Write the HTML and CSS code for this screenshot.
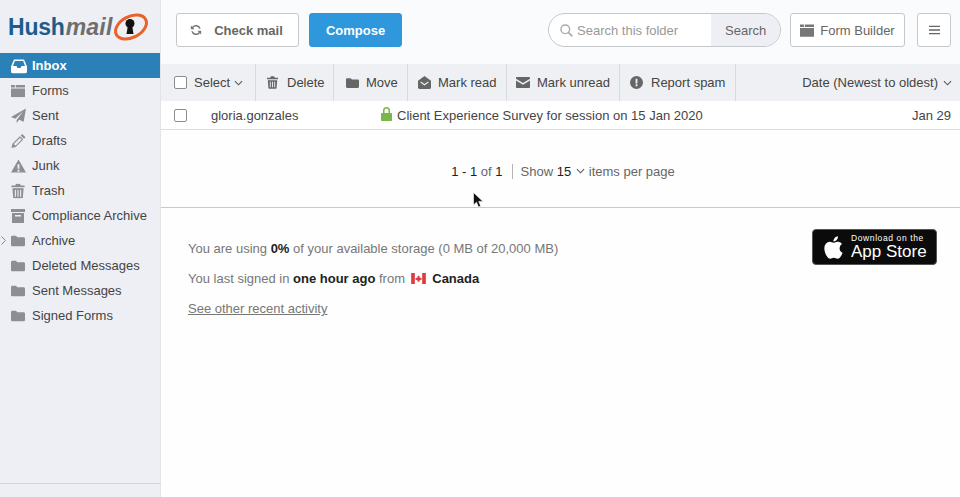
FILE: index.html
```html
<!DOCTYPE html>
<html lang="en">
<head>
  <meta charset="UTF-8" />
  <title>Hushmail</title>
  <link rel="stylesheet" href="styles.css">
</head>
<body>
  <svg class="defs" width="0" height="0">
    <symbol id="folder" viewBox="0 0 16 14"><path d="M1.500 1h4.200l1.600 1.800h7.200c.8 0 1.500.7 1.500 1.500v7.200c0 .8-.7 1.500-1.500 1.500h-13C.7 13 0 12.300 0 11.500v-9C0 1.700.7 1 1.500 1z"/></symbol>
    <symbol id="trash" viewBox="0 0 14 16"><path d="M5 0h4l1 2h4v2H0V2h4zM1 5h12l-.8 10c0 .6-.5 1-1 1H2.800c-.5 0-1-.4-1-1zm2.600 2v7h1.200V7zm2.800 0v7h1.200V7zm2.800 0v7h1.200V7z"/></symbol>
    <symbol id="forms" viewBox="0 0 16 14"><path d="M0 0h4.500v3H0zM5.500 0h10.500v3H5.500zM0 4h16v10H0z"/></symbol>
    <symbol id="chev" viewBox="0 0 10 6"><path d="M1 1l4 4 4-4" fill="none" stroke="currentColor" stroke-width="1.200"/></symbol>
  </svg>

  <aside class="sidebar">
    <div class="logo">
      <span class="logo-hush">Hush</span><span class="logo-mail">mail</span>
      <svg class="logo-ring" width="38" height="30" viewBox="0 0 38 30">
        <ellipse cx="19" cy="15" rx="16.500" ry="10.500" transform="rotate(-27 19 15)" fill="none" stroke="#e8622a" stroke-width="3"/>
        <circle cx="18" cy="11.500" r="4.500" fill="#111"/>
        <path d="M16 13h4l1.500 9h-7z" fill="#111"/>
      </svg>
    </div>
    <nav class="folders">
      <a class="folder active">
        <svg class="ficon" viewBox="0 0 16 15" width="16" height="15"><path d="M3 1h10l3 7v5c0 1-.7 2-2 2H2c-1.300 0-2-1-2-2V8zm.9 1.500L2 7.500h3.500l1 2h3l1-2H14l-1.900-5z" fill="#fff" fill-rule="evenodd"/></svg>
        Inbox
      </a>
      <a class="folder"><svg class="ficon" width="14" height="13"><use href="#forms"/></svg>Forms</a>
      <a class="folder">
        <svg class="ficon" viewBox="0 0 16 16" width="15" height="15"><path d="M16 0L13.500 14 8.700 12 6 15.500V12.300L13 3 4.500 10.800 0 9z"/></svg>
        Sent
      </a>
      <a class="folder">
        <svg class="ficon" viewBox="0 0 16 16" width="15" height="15"><path d="M12 .5l3.500 3.500-1.700 1.700-3.500-3.500zM9.500 3l3.500 3.500-8 8L.5 15.500 1.500 11zM3 11.200l1.800 1.800 6.500-6.500-1.800-1.800z" fill-rule="evenodd"/></svg>
        Drafts
      </a>
      <a class="folder">
        <svg class="ficon" viewBox="0 0 16 14" width="15" height="14"><path d="M8 0l8 14H0zM7 5v5h2V5zm0 6v2h2v-2z" fill-rule="evenodd"/></svg>
        Junk
      </a>
      <a class="folder"><svg class="ficon" width="14" height="15"><use href="#trash"/></svg>Trash</a>
      <a class="folder">
        <svg class="ficon" viewBox="0 0 14 14" width="14" height="14"><path d="M0 0h14v3H0zM1 4h12v10H1zm3 2v1.500h6V6z" fill-rule="evenodd"/></svg>
        Compliance Archive
      </a>
      <a class="folder">
        <svg class="expander" width="5" height="9" viewBox="0 0 5 9"><path d="M.5.5l4 4-4 4" fill="none" stroke="#888"/></svg>
        <svg class="ficon" width="14" height="13"><use href="#folder"/></svg>Archive
      </a>
      <a class="folder"><svg class="ficon" width="14" height="13"><use href="#folder"/></svg>Deleted Messages</a>
      <a class="folder"><svg class="ficon" width="14" height="13"><use href="#folder"/></svg>Sent Messages</a>
      <a class="folder"><svg class="ficon" width="14" height="13"><use href="#folder"/></svg>Signed Forms</a>
    </nav>
    <div class="sidebar-foot"></div>
  </aside>

  <main class="main">
    <header class="topbar">
      <button class="btn btn-check">
        <svg viewBox="0 0 14 14" width="12" height="12"><path d="M12.500 5.500A5.700 5.700 0 0 0 2.500 3.200L1 1.700V6h4.300L3.700 4.400a4 4 0 0 1 7 1.100zM1.500 8.500a5.700 5.700 0 0 0 10 2.300l1.500 1.500V8H8.700l1.600 1.600a4 4 0 0 1-7-1.100z" fill="#777"/></svg>
        Check mail
      </button>
      <button class="btn btn-compose">Compose</button>
      <div class="search">
        <div class="search-field">
          <svg viewBox="0 0 14 14" width="13" height="13"><circle cx="5.700" cy="5.700" r="4.700" fill="none" stroke="#aaa" stroke-width="1.500"/><path d="M9 9l4.300 4.300" stroke="#aaa" stroke-width="1.800"/></svg>
          Search this folder
        </div>
        <div class="search-btn">Search</div>
      </div>
      <button class="btn btn-forms"><svg class="icon-grey" width="14" height="13"><use href="#forms"/></svg>Form Builder</button>
      <button class="btn btn-menu">
        <svg viewBox="0 0 12 10" width="11" height="10"><path d="M0 1h12M0 5h12M0 9h12" stroke="#666" stroke-width="1.500"/></svg>
      </button>
    </header>

    <div class="toolbar">
      <div class="tool tool-select"><span class="check"></span>Select<svg class="chev" width="9" height="6"><use href="#chev"/></svg></div>
      <div class="tool tool-delete"><svg class="tool-icon" width="11" height="13"><use href="#trash"/></svg>Delete</div>
      <div class="tool tool-move"><svg class="tool-icon" width="13" height="12"><use href="#folder"/></svg>Move</div>
      <div class="tool tool-read">
        <svg class="tool-icon" viewBox="0 0 14 14" width="13" height="13"><path d="M7 0l7 5v7.500c0 .8-.6 1.500-1.500 1.500h-11C.6 14 0 13.300 0 12.500V5zM2.500 7L7 10.200 11.500 7l-.7-1L7 8.700 3.200 6z" fill-rule="evenodd"/></svg>
        Mark read
      </div>
      <div class="tool tool-unread">
        <svg class="tool-icon" viewBox="0 0 14 11" width="14" height="11"><path d="M1 0h12c.6 0 1 .4 1 1v.8L7 6 0 1.800V1c0-.6.4-1 1-1zM0 3.500l7 4.200 7-4.200V10c0 .6-.4 1-1 1H1c-.6 0-1-.4-1-1z"/></svg>
        Mark unread
      </div>
      <div class="tool tool-spam">
        <svg class="tool-icon" viewBox="0 0 14 14" width="13" height="13"><path d="M7 0a7 7 0 1 1 0 14A7 7 0 0 1 7 0zM6 3v5h2V3zm0 6v2h2V9z" fill-rule="evenodd"/></svg>
        Report spam
      </div>
      <div class="sort">Date (Newest to oldest)<svg class="chev" width="9" height="6"><use href="#chev"/></svg></div>
    </div>

    <div class="message">
      <span class="check"></span>
      <span class="msg-from">gloria.gonzales</span>
      <svg class="msg-lock" viewBox="0 0 11 14" width="11" height="14"><path d="M2 6V3.500a3.500 3.500 0 0 1 7 0V6h1c.6 0 1 .4 1 1v6c0 .6-.4 1-1 1H1c-.6 0-1-.4-1-1V7c0-.6.4-1 1-1zm1.500 0h4V3.500a2 2 0 0 0-4 0z" fill="#7ab648" fill-rule="evenodd"/></svg>
      <span class="msg-subject">Client Experience Survey for session on 15 Jan 2020</span>
      <span class="msg-date">Jan 29</span>
    </div>

    <div class="pager">
      <span class="pager-count"><b>1 - 1</b> of <b>1</b></span>
      <span class="pager-show">Show <b>15</b><svg class="chev" width="9" height="6"><use href="#chev"/></svg> items per page</span>
    </div>

    <section class="info">
      <div class="info-text">
        <p>You are using <strong>0%</strong> of your available storage (0 MB of 20,000 MB)</p>
        <p>You last signed in <strong>one hour ago</strong> from
          <svg class="flag" viewBox="0 0 16 12" width="15" height="11"><rect width="16" height="12" fill="#fff"/><rect width="4" height="12" fill="#dd3b3f"/><rect x="12" width="4" height="12" fill="#dd3b3f"/><path d="M8 2.500l.7 1.400.8-.4-.3 2 1-.6.4.8 1-.2-.4 1.300.4.300L9 8.300l.1 1.200H7l.1-1.200-2.600-1.200.4-.3-.4-1.300 1 .2.400-.8 1 .6-.3-2 .8.400z" fill="#dd3b3f"/></svg>
          <strong>Canada</strong></p>
        <p><a class="activity">See other recent activity</a></p>
      </div>
      <div class="appstore">
        <svg viewBox="0 0 24 24" width="27" height="27"><path d="M18.710 19.500c-.83 1.240-1.710 2.450-3.050 2.470-1.340.03-1.770-.79-3.290-.79-1.530 0-2 .77-3.270.82-1.310.05-2.300-1.320-3.140-2.530C4.250 17 2.940 12.450 4.700 9.390c.87-1.520 2.430-2.480 4.120-2.510 1.280-.02 2.500.87 3.290.87.78 0 2.260-1.070 3.810-.91.65.03 2.470.26 3.640 1.980-.09.06-2.170 1.280-2.150 3.810.03 3.020 2.650 4.030 2.680 4.040-.03.07-.42 1.440-1.380 2.830M13 3.500c.73-.83 1.940-1.460 2.940-1.500.13 1.170-.34 2.350-1.040 3.190-.69.85-1.830 1.510-2.950 1.420-.15-1.150.41-2.350 1.050-3.110z" fill="#fff"/></svg>
        <div class="appstore-text">
          <span class="appstore-small">Download on the</span>
          <span class="appstore-big">App Store</span>
        </div>
      </div>
    </section>

    <svg class="cursor" viewBox="0 0 11 16" width="11" height="16"><path d="M.5.5v12.500l3-2.800 2 4.800 2.200-1-2-4.600h4.200z" fill="#111" stroke="#fff" stroke-width=".6"/></svg>
  </main>
</body>
</html>
```

FILE: styles.css
```css
* { box-sizing: border-box; }
html, body { height: 100%; }
body {
  margin: 0;
  display: flex;
  height: 100vh;
  overflow: hidden;
  background: #fefefe;
  color: #444;
  font-family: "Liberation Sans", Arial, sans-serif;
  font-size: 13px;
}
.defs { position: absolute; }
b { font-weight: normal; color: #222; }

/* sidebar */
.sidebar {
  width: 161px;
  flex: none;
  display: flex;
  flex-direction: column;
  background: #eeeff4;
  border-right: 1px solid #e3e4e8;
}
.logo {
  height: 53px;
  display: flex;
  align-items: center;
  padding: 1px 0 0 8px;
  font-size: 23px;
  font-weight: bold;
  line-height: 1;
}
.logo-hush { color: #1c5d8c; letter-spacing: -.2px; }
.logo-mail { color: #6e6e6e; font-style: italic; letter-spacing: .2px; margin-left: 1px; }
.logo-ring { margin-left: -1px; flex: none; }
.folders { display: flex; flex-direction: column; }
.folder {
  position: relative;
  height: 25px;
  display: flex;
  align-items: center;
  padding-left: 32px;
  color: #444;
}
.folder.active {
  background: #2a81b7;
  color: #fff;
  font-weight: bold;
}
.ficon {
  position: absolute;
  left: 11px;
  top: 50%;
  transform: translateY(-50%);
  fill: #8b8f93;
}
.expander { position: absolute; left: 1px; top: 8px; }
.sidebar-foot {
  margin-top: auto;
  height: 14px;
  border-top: 1px solid #d3d6d9;
  margin-right: -1px;
}

/* main */
.main { position: relative; flex: 1; min-width: 0; display: flex; flex-direction: column; }
.topbar {
  height: 64px;
  display: flex;
  align-items: center;
  padding: 0 9px 4px 15px;
  background: #fafbfd;
}
.btn {
  height: 34px;
  display: flex;
  align-items: center;
  justify-content: center;
  border: 1px solid #c5c8ca;
  border-radius: 3px;
  background: #fff;
  color: #666;
  font-family: inherit;
  font-size: 13px;
  padding: 0;
}
.btn-check { width: 123px; gap: 12px; padding-right: 2px; font-weight: bold; }
.btn-compose {
  width: 93px;
  margin-left: 10px;
  background: #2f97dc;
  border-color: #2f97dc;
  color: #fff;
  font-weight: bold;
}
.search {
  width: 233px;
  height: 34px;
  margin-left: auto;
  display: flex;
  border: 1px solid #c5c8ca;
  border-radius: 17px;
  overflow: hidden;
  background: #fff;
}
.search-field {
  flex: 1;
  display: flex;
  align-items: center;
  gap: 4px;
  padding-left: 11px;
  color: #999;
}
.search-btn {
  width: 69px;
  display: flex;
  align-items: center;
  padding-left: 14px;
  padding-top: 1px;
  background: #eeeff4;
  color: #666;
}
.btn-forms { width: 115px; margin-left: 9px; gap: 6px; }
.icon-grey { fill: #777; }
.btn-menu { width: 34px; margin-left: 12px; }

/* toolbar */
.toolbar {
  height: 37px;
  display: flex;
  align-items: stretch;
  background: #eef0f3;
  color: #444;
}
.tool {
  display: flex;
  align-items: center;
  border-right: 1px solid #d8dbde;
}
.tool-icon { fill: #666; flex: none; }
.tool-select { width: 95px; padding-left: 13px; }
.tool-select .chev { margin-left: 4px; }
.tool-delete { width: 78px; padding-left: 11px; gap: 9px; }
.tool-move { width: 74px; padding-left: 12px; gap: 7px; }
.tool-read { width: 99px; padding-left: 10px; gap: 7px; }
.tool-unread { width: 113px; padding-left: 9px; gap: 7px; }
.tool-spam { width: 116px; padding-left: 10px; gap: 8px; }
.sort { margin-left: auto; padding-right: 8px; display: flex; align-items: center; gap: 5px; }
.chev { color: #555; flex: none; }
.check {
  width: 13px;
  height: 13px;
  flex: none;
  margin-right: 7px;
  border: 1px solid #8a8d90;
  border-radius: 2px;
  background: #fff;
}

/* message row */
.message {
  height: 29px;
  display: flex;
  align-items: center;
  padding: 0 9px 0 13px;
  background: #fff;
  border-bottom: 1px solid #dcdee0;
}
.msg-from { width: 170px; margin-left: 17px; }
.msg-lock { margin-bottom: 3px; }
.msg-subject { margin-left: 5px; }
.msg-date { margin-left: auto; }

/* pager */
.pager {
  height: 78px;
  display: flex;
  align-items: center;
  justify-content: center;
  padding: 5px 0 0 5px;
  color: #666;
  border-bottom: 1px solid #c9c9d0;
}
.pager-count { padding-right: 9px; border-right: 1px solid #b5b5b5; }
.pager-show { padding-left: 8px; display: flex; align-items: center; white-space: pre; }
.pager-show .chev { margin-left: 5px; }

/* storage info */
.info {
  display: flex;
  justify-content: space-between;
  align-items: flex-start;
  padding: 21px 23px 0 27px;
  color: #777;
}
.info-text { padding-top: 5px; }
.info p { margin: 0; height: 30px; line-height: 30px; }
.info strong { color: #222; }
.flag { margin: 0 3px 0 2px; vertical-align: -1px; }
.activity { text-decoration: underline; color: #777; }
.appstore {
  width: 125px;
  height: 36px;
  display: flex;
  align-items: center;
  gap: 4px;
  padding-left: 7px;
  background: #0b0b0b;
  border: 1px solid #555;
  border-radius: 4px;
  color: #fff;
}
.appstore-text { display: flex; flex-direction: column; }
.appstore-small { font-size: 8.500px; letter-spacing: .6px; line-height: 10px; }
.appstore-big { font-size: 17px; line-height: 18px; }

.cursor { position: absolute; left: 312px; top: 192px; }
```
